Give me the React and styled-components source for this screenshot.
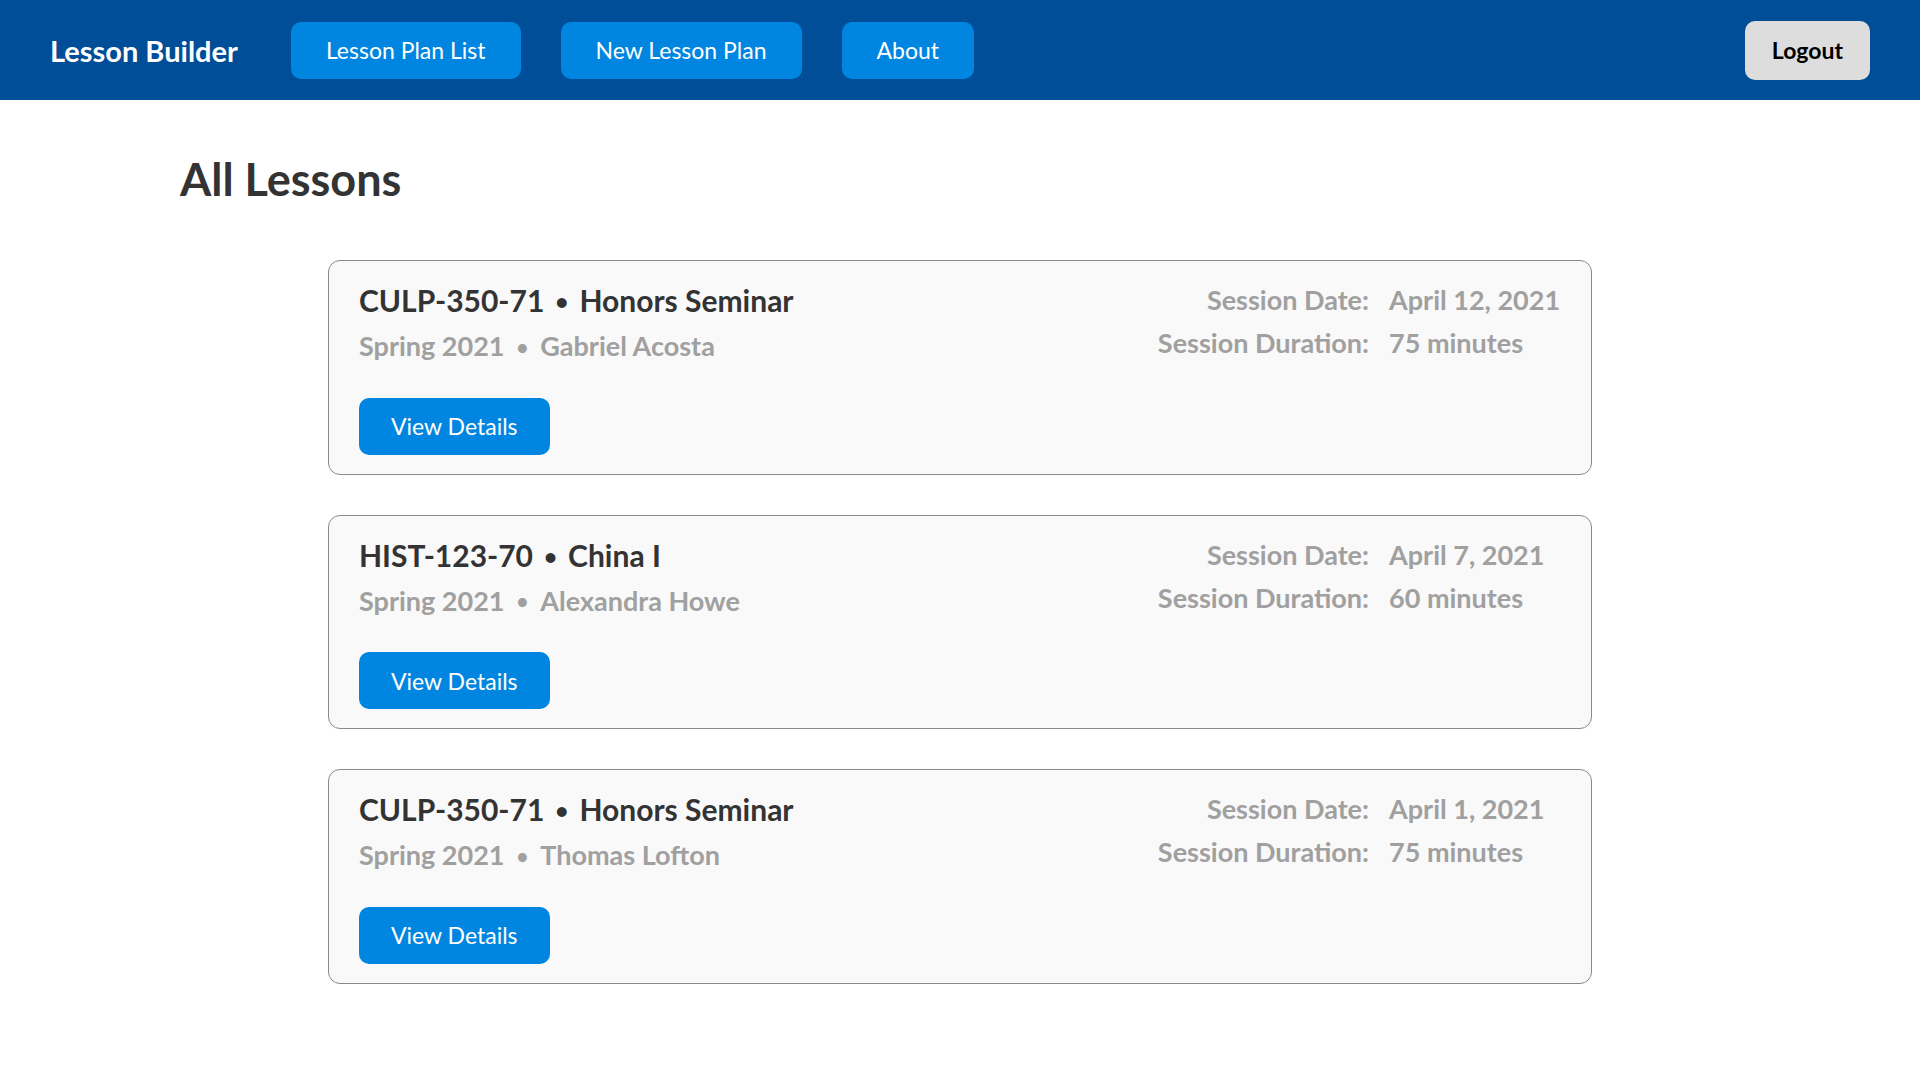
import React from 'react';
import styled, { createGlobalStyle } from 'styled-components';

const GlobalStyle = createGlobalStyle`
  body {
    margin: 0;
    font-family: Lato, 'Open Sans', sans-serif;
    background: #ffffff;
    color: #333333;
  }
`;

const StyledNav = styled.nav`
  display: flex;
  align-items: center;
  gap: 40px;
  height: 100px;
  padding: 0 50px;
  box-sizing: border-box;
  background-color: #004d98;
`;

const StyledBrand = styled.div`
  font-size: 29px;
  font-weight: 700;
  color: #ffffff;
  margin-right: 13px;
`;

const StyledNavButton = styled.button`
  border: none;
  border-radius: 10px;
  font-family: inherit;
  cursor: pointer;
  background-color: ${({ variant }) => (variant === 'light' ? '#dddddd' : '#0086e0')};
  color: ${({ variant }) => (variant === 'light' ? '#000000' : '#ffffff')};
  font-weight: ${({ variant }) => (variant === 'light' ? 700 : 400)};
  font-size: 23px;
  margin-left: ${({ variant }) => (variant === 'light' ? 'auto' : '0')};
  padding: ${({ variant }) => (variant === 'light' ? '0 27px' : '0 35px')};
  height: ${({ variant }) => (variant === 'light' ? '59px' : '57px')};
`;

const StyledMain = styled.main`
  padding: 0 180px 80px;
`;

const StyledHeading = styled.h1`
  margin: 0;
  padding: 50px 0 52px;
  font-size: 45px;
  line-height: 58px;
  font-weight: 700;
  color: #333333;
`;

const StyledList = styled.div`
  display: flex;
  flex-direction: column;
  gap: 40px;
  max-width: 1264px;
  margin: 0 auto;
`;

const StyledCard = styled.div`
  display: flex;
  justify-content: space-between;
  align-items: flex-start;
  padding: 17px 30px 19px;
  border: 1px solid #8a8a8a;
  border-radius: 12px;
  background-color: #f9f9f9;
`;

const StyledInfo = styled.div`
  display: flex;
  flex-direction: column;
  align-items: flex-start;
  padding-top: 3px;
`;

const StyledTitle = styled.div`
  font-size: 30px;
  line-height: 39px;
  font-weight: 700;
  color: #333333;
`;

const StyledSubtitle = styled.div`
  margin-top: 7px;
  font-size: 27px;
  line-height: 36px;
  font-weight: 700;
  color: #a0a0a0;
`;

const StyledDot = styled.span`
  display: inline-block;
  margin: 0 ${({ small }) => (small ? '12px' : '11px')};
  font-size: 0.75em;
  vertical-align: 0.08em;
`;

const StyledDetailsButton = styled.button`
  margin-top: 33px;
  height: 57px;
  padding: 0 32px;
  border: none;
  border-radius: 10px;
  background-color: #0086e0;
  color: #ffffff;
  font-family: inherit;
  font-size: 23px;
  cursor: pointer;
`;

const StyledMeta = styled.dl`
  display: grid;
  grid-template-columns: auto 172px;
  column-gap: 20px;
  margin: 0;
  font-size: 27px;
  line-height: 43px;
  font-weight: 700;
  color: #a0a0a0;

  dt {
    text-align: right;
  }

  dd {
    margin: 0;
  }
`;

const lessons = [
  {
    code: 'CULP-350-71',
    name: 'Honors Seminar',
    term: 'Spring 2021',
    teacher: 'Gabriel Acosta',
    date: 'April 12, 2021',
    duration: '75 minutes',
  },
  {
    code: 'HIST-123-70',
    name: 'China I',
    term: 'Spring 2021',
    teacher: 'Alexandra Howe',
    date: 'April 7, 2021',
    duration: '60 minutes',
  },
  {
    code: 'CULP-350-71',
    name: 'Honors Seminar',
    term: 'Spring 2021',
    teacher: 'Thomas Lofton',
    date: 'April 1, 2021',
    duration: '75 minutes',
  },
];

const App = () => {
  return (
    <>
      <GlobalStyle />
      <StyledNav>
        <StyledBrand>Lesson Builder</StyledBrand>
        <StyledNavButton>Lesson Plan List</StyledNavButton>
        <StyledNavButton>New Lesson Plan</StyledNavButton>
        <StyledNavButton>About</StyledNavButton>
        <StyledNavButton variant="light">Logout</StyledNavButton>
      </StyledNav>
      <StyledMain>
        <StyledHeading>All Lessons</StyledHeading>
        <StyledList>
          {lessons.map((lesson, i) => (
            <StyledCard key={i}>
              <StyledInfo>
                <StyledTitle>
                  {lesson.code}
                  <StyledDot>&bull;</StyledDot>
                  {lesson.name}
                </StyledTitle>
                <StyledSubtitle>
                  {lesson.term}
                  <StyledDot small>&bull;</StyledDot>
                  {lesson.teacher}
                </StyledSubtitle>
                <StyledDetailsButton>View Details</StyledDetailsButton>
              </StyledInfo>
              <StyledMeta>
                <dt>Session Date:</dt>
                <dd>{lesson.date}</dd>
                <dt>Session Duration:</dt>
                <dd>{lesson.duration}</dd>
              </StyledMeta>
            </StyledCard>
          ))}
        </StyledList>
      </StyledMain>
    </>
  );
};

export default App;
